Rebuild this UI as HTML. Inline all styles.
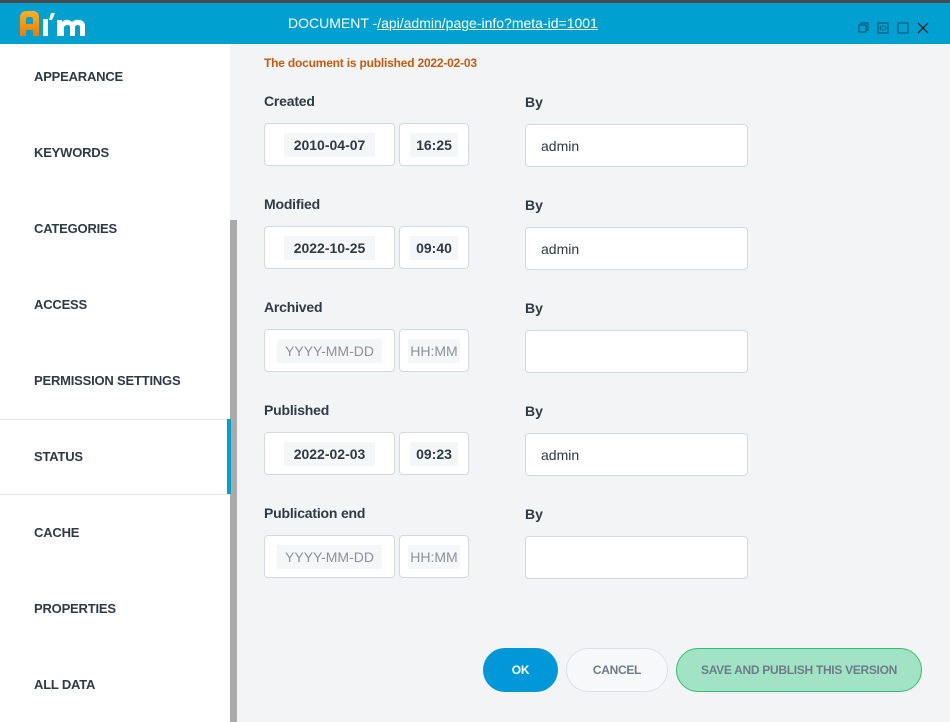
<!DOCTYPE html><html><head><style>
*{box-sizing:border-box;margin:0;padding:0}
body{width:950px;height:722px;overflow:hidden;background:#f3f4f6;font-family:"Liberation Sans",sans-serif;position:relative;color:#2e3a45}
.a{position:absolute}
.top{left:0;top:0;width:950px;height:3px;background:#4a4a4a}
.hdr{left:0;top:3px;width:950px;height:41px;background:#00a0d0}
.side{left:0;top:44px;width:230px;height:678px;background:#fff}
.scroll{left:230px;top:220px;width:7px;height:502px;background:#aaa}
.nav{left:34px;font-size:13px;font-weight:bold;color:#2e3a45;letter-spacing:-0.2px}
.lbl{left:264px;font-size:14px;font-weight:bold;color:#2e3a45;letter-spacing:-0.2px}
.by{left:525px;font-size:14px;font-weight:bold;color:#2e3a45}
.box{background:#fff;border:1px solid #d4d8de;border-radius:4px;display:flex;align-items:center;justify-content:center;font-size:14px}
.in{background:#f5f6f7;padding:4px 10px;font-weight:bold;color:#2e3a45}
.ph{background:#f5f6f7;padding:4px 8px;color:#8a939c}
.btn{border-radius:22px;height:44px;top:648px;display:flex;align-items:center;justify-content:center;font-size:12px;font-weight:bold;letter-spacing:-0.3px}
</style></head><body>
<div class="a top"></div>
<div class="a hdr"></div>
<svg class="a" style="left:18px;top:10px" width="72" height="28" viewBox="0 0 72 28">
<defs><linearGradient id="g" x1="0" y1="0" x2="0" y2="1"><stop offset="0" stop-color="#ffb020"/><stop offset="1" stop-color="#f07a00"/></linearGradient></defs>
<path d="M2 26 L2 8 Q2 1 9 1 L15 1 Q21 1 21 8 L21 26 L15 26 L15 20 L8 20 L8 26 Z M8 14 L15 14 L15 9 Q15 7 12 7 L11 7 Q8 7 8 9 Z" fill="url(#g)"/>
<rect x="25" y="9" width="5" height="17" fill="#fff"/><path d="M33 3 L37 3 L34 10 L31 10 Z" fill="#fff"/>
<path d="M39 26 L39 10 L44 10 L44 12 Q47 9 51 10 Q53 11 54 12 Q57 9 62 10 Q67 11 67 16 L67 26 L62 26 L62 17 Q62 15 60 15 Q57 15 57 17 L57 26 L52 26 L52 17 Q52 15 50 15 Q47 15 46 17 L46 26 Z" fill="#fff"/>
</svg>
<div class="a" style="left:288px;top:15px;font-size:14px;color:#fff">DOCUMENT -<u>/api/admin/page-info?meta-id=1001</u></div>
<svg class="a" style="left:857px;top:21px" width="80" height="14" viewBox="0 0 80 14" fill="none" stroke="#125a80" stroke-width="1.2">
<rect x="2" y="4" width="7" height="7"/><path d="M4 4V2h7v7H9"/>
<rect x="21" y="2" width="10" height="10"/><path d="M24 5l-1 2 1 2M28 5l1 2-1 2M26 4v2M26 8v2"/>
<rect x="41" y="2" width="10" height="10"/>
<path d="M61 2l10 10M71 2L61 12" stroke="#111"/>
</svg>
<div class="a side"></div>
<div class="a scroll"></div>
<div class="a" style="left:0;top:419px;width:230px;height:1px;background:#e4e6ea"></div>
<div class="a" style="left:0;top:494px;width:230px;height:1px;background:#e4e6ea"></div>
<div class="a" style="left:227px;top:419px;width:4px;height:75px;background:#00a0d0"></div>
<div class="a nav" style="top:69px">APPEARANCE</div>
<div class="a nav" style="top:145px">KEYWORDS</div>
<div class="a nav" style="top:221px">CATEGORIES</div>
<div class="a nav" style="top:297px">ACCESS</div>
<div class="a nav" style="top:373px">PERMISSION SETTINGS</div>
<div class="a nav" style="top:449px">STATUS</div>
<div class="a nav" style="top:525px">CACHE</div>
<div class="a nav" style="top:601px">PROPERTIES</div>
<div class="a nav" style="top:677px">ALL DATA</div>
<div class="a" style="left:264px;top:56px;font-size:12px;font-weight:bold;color:#c85a10;letter-spacing:-0.2px">The document is published 2022-02-03</div>

<div class="a lbl" style="top:93px">Created</div><div class="a by" style="top:94px">By</div>
<div class="a box" style="left:264px;top:123px;width:131px;height:43px"><span class="in">2010-04-07</span></div>
<div class="a box" style="left:399px;top:123px;width:70px;height:43px"><span class="in" style="padding:4px 6px">16:25</span></div>
<div class="a box" style="left:525px;top:124px;width:223px;height:43px;justify-content:flex-start;padding-left:15px">admin</div>

<div class="a lbl" style="top:196px">Modified</div><div class="a by" style="top:197px">By</div>
<div class="a box" style="left:264px;top:226px;width:131px;height:43px"><span class="in">2022-10-25</span></div>
<div class="a box" style="left:399px;top:226px;width:70px;height:43px"><span class="in" style="padding:4px 6px">09:40</span></div>
<div class="a box" style="left:525px;top:227px;width:223px;height:43px;justify-content:flex-start;padding-left:15px">admin</div>

<div class="a lbl" style="top:299px">Archived</div><div class="a by" style="top:300px">By</div>
<div class="a box" style="left:264px;top:329px;width:131px;height:43px"><span class="ph">YYYY-MM-DD</span></div>
<div class="a box" style="left:399px;top:329px;width:70px;height:43px"><span class="ph" style="padding:4px 2px">HH:MM</span></div>
<div class="a box" style="left:525px;top:330px;width:223px;height:43px"></div>

<div class="a lbl" style="top:402px">Published</div><div class="a by" style="top:403px">By</div>
<div class="a box" style="left:264px;top:432px;width:131px;height:43px"><span class="in">2022-02-03</span></div>
<div class="a box" style="left:399px;top:432px;width:70px;height:43px"><span class="in" style="padding:4px 6px">09:23</span></div>
<div class="a box" style="left:525px;top:433px;width:223px;height:43px;justify-content:flex-start;padding-left:15px">admin</div>

<div class="a lbl" style="top:505px">Publication end</div><div class="a by" style="top:506px">By</div>
<div class="a box" style="left:264px;top:535px;width:131px;height:43px"><span class="ph">YYYY-MM-DD</span></div>
<div class="a box" style="left:399px;top:535px;width:70px;height:43px"><span class="ph" style="padding:4px 2px">HH:MM</span></div>
<div class="a box" style="left:525px;top:536px;width:223px;height:43px"></div>

<div class="a btn" style="left:483px;width:75px;background:#0098d8;color:#fff">OK</div>
<div class="a btn" style="left:566px;width:102px;background:#f7f8fa;border:1px solid #dcdfe4;color:#6e7b88">CANCEL</div>
<div class="a btn" style="left:676px;width:246px;background:#a2e3c6;border:1px solid #2fc070;color:#6e7b88">SAVE AND PUBLISH THIS VERSION</div>
</body></html>
